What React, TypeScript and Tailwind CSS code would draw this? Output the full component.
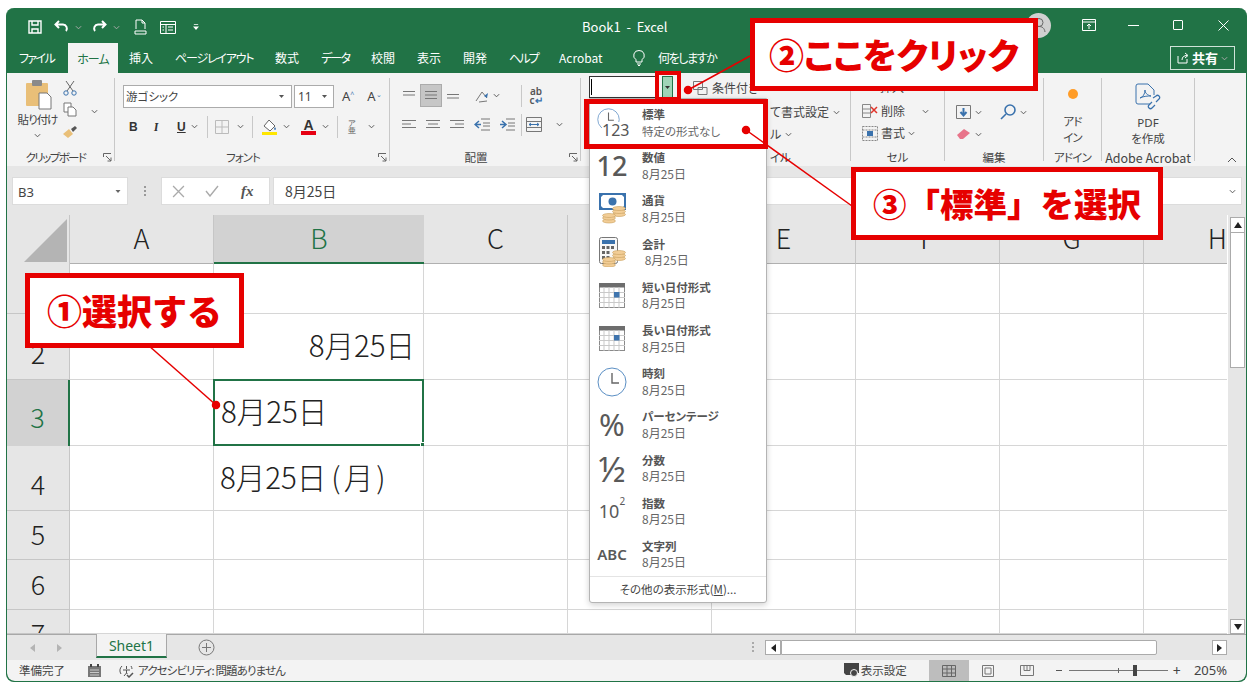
import type { ReactNode } from "react";

const UI = "font-['Noto_Sans_CJK_JP','Noto_Sans',sans-serif] [font-feature-settings:'palt']";
const NOPALT = "[font-feature-settings:normal]";

const Chev = ({ className = "" }: { className?: string }) => (
  <svg viewBox="0 0 8 5" className={`w-[7px] h-[5px] ${className}`} fill="none" stroke="#555" strokeWidth="1.1">
    <path d="M1 1l3 3 3-3" />
  </svg>
);

const Launcher = () => (
  <svg viewBox="0 0 9 9" className="w-[9px] h-[9px]" fill="none" stroke="#666">
    <path d="M.5 4V.5H8" />
    <path d="M3 3l5 5M4.500 8H8V4.500" />
  </svg>
);

const Sep = ({ className = "" }: { className?: string }) => <div className={`w-px bg-[#c8c8c8] ${className}`} />;

const Group = ({ w, label, labelCls = "", launcher, children }: { w: string; label: string; labelCls?: string; launcher?: boolean; children: ReactNode }) => (
  <div className={`${w} h-[93px] flex flex-col shrink-0`}>
    <div className="h-[76px] overflow-visible">{children}</div>
    <div className={`relative h-[17px] text-[11.5px] leading-[17px] text-[#444] text-center whitespace-nowrap ${labelCls}`}>
      {label}
      {launcher && (
        <span className="absolute right-[2px] top-[4px]">
          <Launcher />
        </span>
      )}
    </div>
  </div>
);

const Lines = ({ rows }: { rows: { x: number; w: number }[] }) => (
  <svg viewBox="0 0 16 12" className="w-4 h-3" stroke="#777" strokeWidth="1">
    {rows.map((r, i) => (
      <path key={i} d={`M${r.x} ${1.5 + i * 3.5}h${r.w}`} />
    ))}
  </svg>
);

const Cal = () => (
  <svg viewBox="0 0 26 25" className="w-[26px] h-[25px]">
    <rect x="0.5" y="0.5" width="25" height="24" fill="#fff" stroke="#8a8a8a" />
    <rect x="0" y="0" width="26" height="4.5" fill="#6d6d6d" />
    <path d="M5 4v21M10 4v21M15 4v21M20 4v21M0 9.500h26M0 14.500h26M0 19.500h26" stroke="#c9c9c9" strokeWidth="1" />
    <rect x="15" y="9" width="5.500" height="5.500" fill="#3f74ad" />
  </svg>
);

const Clock = ({ className = "" }: { className?: string }) => (
  <svg viewBox="0 0 30 30" className={className} fill="none">
    <circle cx="15" cy="15" r="14" stroke="#5b8fc4" strokeWidth="1" />
    <path d="M15 6v10h7" stroke="#666" strokeWidth="1.400" />
  </svg>
);

const Coins = () => (
  <g fill="#f2cd96" stroke="#c9a15f" strokeWidth="0.6">
    <ellipse cx="20" cy="21.500" rx="6.500" ry="2" />
    <ellipse cx="20" cy="18.500" rx="6.500" ry="2" />
    <ellipse cx="20" cy="15.500" rx="6.500" ry="2" />
    <ellipse cx="10" cy="28" rx="6.500" ry="2" />
    <ellipse cx="10" cy="25" rx="6.500" ry="2" />
    <ellipse cx="10" cy="22.500" rx="6.500" ry="2" />
  </g>
);

const Money = () => (
  <svg viewBox="0 0 27 31" className="w-[27px] h-[31px]">
    <rect x="1" y="1" width="25" height="15" fill="#fff" stroke="#3a72ad" strokeWidth="2" />
    <path d="M0 0h6L0 6zM27 0h-6l6 6zM0 17h6l-6-6zM27 17h-6l6-6z" fill="#3a72ad" />
    <circle cx="13.500" cy="8.500" r="4" fill="#3a72ad" />
    <Coins />
  </svg>
);

const Calc = () => (
  <svg viewBox="0 0 28 30" className="w-[28px] h-[30px]">
    <rect x="1.500" y="0.500" width="18" height="26" rx="2" fill="#f8f8f8" stroke="#777" />
    <rect x="4" y="3" width="13" height="4" fill="#3a72ad" />
    <path d="M4 9h3v3H4zM8.500 9h3v3h-3zM13 9h3v3h-3zM4 14h3v3H4zM8.500 14h3v3h-3zM4 19h3v3H4zM8.500 19h3v3h-3z" fill="#666" />
    <g transform="translate(1 0)">
      <Coins />
    </g>
  </svg>
);

const NUM = "leading-none text-[#595959] font-['Noto_Sans',sans-serif]";

const FORMATS: { name: string; sub: string; icon: ReactNode }[] = [
  {
    name: "標準",
    sub: "特定の形式なし",
    icon: (
      <div className="relative w-[32px] h-[32px]">
        <Clock className="absolute left-[1px] top-[1px] w-[23px] h-[23px]" />
        <span className="absolute left-[6px] top-[15px] text-[16px] leading-[17px] text-[#555] bg-white font-['Noto_Sans',sans-serif]">123</span>
      </div>
    ),
  },
  { name: "数値", sub: "8月25日", icon: <span className={`text-[27px] font-medium ${NUM}`}>12</span> },
  { name: "通貨", sub: "8月25日", icon: <Money /> },
  { name: "会計", sub: "\u00a08月25日", icon: <Calc /> },
  { name: "短い日付形式", sub: "8月25日", icon: <Cal /> },
  { name: "長い日付形式", sub: "8月25日", icon: <Cal /> },
  { name: "時刻", sub: "8月25日", icon: <Clock className="w-[30px] h-[30px]" /> },
  { name: "パーセンテージ", sub: "8月25日", icon: <span className={`text-[31px] ${NUM}`}>%</span> },
  { name: "分数", sub: "8月25日", icon: <span className={`text-[35px] ${NUM}`}>½</span> },
  {
    name: "指数",
    sub: "8月25日",
    icon: (
      <span className={`text-[18px] ${NUM}`}>
        10<sup className="text-[10px] align-[8px]">2</sup>
      </span>
    ),
  },
  { name: "文字列", sub: "8月25日", icon: <span className={`text-[15px] font-semibold ${NUM}`}>ABC</span> },
];

const COLS = ["A", "B", "C", "D", "E", "F", "G", "H"];

const TABS = [
  { t: "挿入", w: "w-[24px]" },
  { t: "ページレイアウト", w: "w-[78px] tracking-[-1.2px]" },
  { t: "数式", w: "w-[24px]" },
  { t: "データ", w: "w-[28px] tracking-[-1.8px]" },
  { t: "校閲", w: "w-[24px]" },
  { t: "表示", w: "w-[24px]" },
  { t: "開発", w: "w-[24px]" },
  { t: "ヘルプ", w: "w-[28px] tracking-[-1.8px]" },
  { t: "Acrobat", w: "w-[46px]" },
];

const TitleBar = () => (
  <div className="h-[34px] flex items-center text-white">
    <div className="flex items-center pt-[4px]">
      <svg viewBox="0 0 14 14" className="ml-[21px] w-[14px] h-[14px]" fill="none" stroke="#fff" strokeWidth="1.400">
        <path d="M1 1h12v12H1z" />
        <path d="M4 1v4h6V1M4 13V9h6v4" />
      </svg>
      <svg viewBox="0 0 16 14" className="ml-[12px] w-[16px] h-[14px]" fill="none" stroke="#fff" strokeWidth="2">
        <path d="M5 1L1.500 4.500 5 8M2 4.500h7a4 4 0 0 1 3 6.500" />
      </svg>
      <Chev className="ml-[5px] invert" />
      <svg viewBox="0 0 16 14" className="ml-[9px] w-[16px] h-[14px]" fill="none" stroke="#fff" strokeWidth="2">
        <path d="M11 1l3.500 3.500L11 8M14 4.500H7a4 4 0 0 0-3 6.500" />
      </svg>
      <Chev className="ml-[6px] invert" />
      <svg viewBox="0 0 13 16" className="ml-[14px] w-[13px] h-[16px]" fill="none" stroke="#fff">
        <path d="M2 10V1h6l3 3v6M8 1v3h3M1 12h11v3H1z" />
      </svg>
      <svg viewBox="0 0 16 13" className="ml-[13px] w-[16px] h-[13px]" fill="none" stroke="#fff">
        <path d="M.5.500h15v12H.5zM.5 3.500h15M6 3.500v9M8 6h5M8 9h5M2.500 6H4M2.500 9H4" />
      </svg>
      <svg viewBox="0 0 7 7" className="ml-[17px] w-[6px] h-[6px]" fill="#fff">
        <path d="M1 0h5v1H1zM0 3h7L3.500 7z" />
      </svg>
      <div className="ml-[383px] text-[13px] whitespace-nowrap">Book1&nbsp; -&nbsp; Excel</div>
    </div>
    <div className="ml-auto flex items-center">
      <div className="w-[25px] h-[25px] rounded-full bg-[#d0d0d0] flex items-center justify-center">
        <svg viewBox="0 0 16 16" className="w-4 h-4" fill="none" stroke="#666">
          <circle cx="8" cy="5.500" r="4" />
          <path d="M2 15c.5-4 3-5.500 6-5.500s5.500 1.500 6 5.500" />
        </svg>
      </div>
      <svg viewBox="0 0 14 12" className="ml-[31px] w-[14px] h-[12px]" fill="none" stroke="#fff">
        <path d="M.5.500h13v11H.5zM.5 3h13M7 10V5M5 7l2-2 2 2" />
      </svg>
      <div className="ml-[32px] w-[11px] h-px bg-white" />
      <div className="ml-[34px] w-[10px] h-[10px] border border-white rounded-[1px]" />
      <svg viewBox="0 0 11 11" className="ml-[35px] mr-[17px] w-[11px] h-[11px]" stroke="#fff" strokeWidth="1">
        <path d="M.5.500l10 10M10.500.500l-10 10" />
      </svg>
    </div>
  </div>
);

const TabBar = () => (
  <div className="h-[31px] flex text-[12px] text-white whitespace-nowrap">
    <div className="ml-[12px] w-[34px] leading-[31px] tracking-[-1.6px]">ファイル</div>
    <div className="ml-[15px] w-[50px] bg-[#f3f3f3] text-[#217346] text-center leading-[31px] mt-px tracking-[-1px]">ホーム</div>
    <div className="ml-[11px] flex gap-[22px] leading-[31px]">
      {TABS.map((t) => (
        <div key={t.t} className={t.w}>
          {t.t}
        </div>
      ))}
    </div>
    <svg viewBox="0 0 12 16" className="ml-[28px] mt-[8px] w-[12px] h-[16px]" fill="none" stroke="#fff">
      <path d="M6 .500a5 5 0 0 1 3 9.200V12H3V9.700A5 5 0 0 1 6 .500zM4 14h4M5 15.500h2" />
    </svg>
    <div className="ml-[13px] leading-[31px] tracking-[-1.4px]">何をしますか</div>
    <div className="ml-auto mr-[11px] mt-[4px] w-[65px] h-[24px] border border-[#cfe3d8] flex items-center justify-center gap-[3px]">
      <svg viewBox="0 0 12 12" className="w-[12px] h-[12px]" fill="none" stroke="#fff">
        <path d="M1 4v7h9V7M5 8c0-3 2-4.500 5-4.500M8 1l3 2.500L8 6" />
      </svg>
      <span className="font-bold text-[13px]">共有</span>
      <Chev className="invert" />
    </div>
  </div>
);

const Clipboard = () => (
  <div className="flex pl-[10px] pt-[7px] text-[11.5px] text-[#444]">
    <div className="w-[41px] flex flex-col items-center">
      <svg viewBox="0 0 26 30" className="ml-[2px] w-[26px] h-[30px]">
        <rect x="0" y="3" width="22" height="23" rx="1" fill="#e9bf78" />
        <rect x="6" y="0" width="10" height="6" rx="1" fill="#8a8a8a" />
        <path d="M13 13h8l4 4v12H13z" fill="#fff" stroke="#777" />
      </svg>
      <div className="mt-[1px] whitespace-nowrap leading-[16px] tracking-[-1px]">貼り付け</div>
      <Chev className="mt-[6px]" />
    </div>
    <div className="ml-[4px] w-[16px] flex flex-col items-center">
      <svg viewBox="0 0 14 16" className="w-[14px] h-[16px]" fill="none" stroke="#666">
        <path d="M3 1l7 10M11 1L4 11" />
        <circle cx="3" cy="13" r="2.200" stroke="#3a72ad" />
        <circle cx="11" cy="13" r="2.200" stroke="#3a72ad" />
      </svg>
      <svg viewBox="0 0 14 15" className="mt-[6px] w-[14px] h-[15px]" fill="#fff" stroke="#777">
        <path d="M1 1h7v9H1z" />
        <path d="M5 5h5l3 3v6H5z" />
      </svg>
      <svg viewBox="0 0 14 12" className="mt-[9px] w-[14px] h-[12px]">
        <path d="M0 8l6-5 4 5-5 4z" fill="#e9bf78" />
        <path d="M8 3l4-3 2 2-4 4z" fill="#555" />
      </svg>
    </div>
    <Chev className="ml-[13px] mt-[29px]" />
  </div>
);

const Font = () => (
  <div className="pl-[8px] pt-[12px] text-[#444]">
    <div className="flex items-center h-[23px]">
      <div className="w-[169px] h-[23px] bg-white border border-[#ababab] flex items-center pl-[2px] pr-[7px] text-[11.5px] justify-between">
        游ゴシック
        <svg viewBox="0 0 5 3" className="w-[5px] h-[3px]" fill="#555">
          <path d="M0 0h5L2.500 3z" />
        </svg>
      </div>
      <div className="ml-[2px] w-[40px] h-[23px] bg-white border border-[#ababab] flex items-center pl-[3px] pr-[6px] text-[12px] justify-between font-['Noto_Sans',sans-serif]">
        11
        <svg viewBox="0 0 5 3" className="w-[5px] h-[3px]" fill="#555">
          <path d="M0 0h5L2.500 3z" />
        </svg>
      </div>
      <span className="ml-[8px] text-[13px] font-['Noto_Sans',sans-serif]">A<sup className="text-[7px] text-[#3a72ad]">^</sup></span>
      <span className="ml-[13px] text-[13px] font-['Noto_Sans',sans-serif]">A<sup className="text-[7px] text-[#3a72ad]">⌄</sup></span>
    </div>
    <div className="mt-[7px] flex items-center h-[23px] text-[12px] font-['Liberation_Sans',sans-serif] text-[#333]">
      <b className="ml-[6px] w-[10px]">B</b>
      <i className="ml-[15px] font-serif font-bold w-[8px]">I</i>
      <u className="ml-[15px] font-bold w-[9px]">U</u>
      <Chev className="ml-[5px]" />
      <Sep className="ml-[9px] h-[22px]" />
      <svg viewBox="0 0 14 14" className="ml-[7px] w-[14px] h-[14px]" fill="none" stroke="#bbb">
        <path d="M.5.500h13v13H.5zM7 .500v13M.5 7h13" />
      </svg>
      <Chev className="ml-[8px]" />
      <Sep className="ml-[8px] h-[22px]" />
      <svg viewBox="0 0 15 16" className="ml-[9px] w-[15px] h-[16px]">
        <path d="M7 1l6 6-5 5-6-5z" fill="#fff" stroke="#666" />
        <path d="M13 8c1 1.500 1.500 2.500 0 3-1.500-.5-1-1.500 0-3z" fill="#3a72ad" />
        <rect y="13" width="15" height="3" fill="#ffe600" />
      </svg>
      <Chev className="ml-[6px]" />
      <div className="ml-[11px] w-[15px] flex flex-col items-center leading-[12px]">
        <span className="font-bold text-[14px] text-[#333]">A</span>
        <span className="w-[15px] h-[4px] bg-[#e60012]" />
      </div>
      <Chev className="ml-[6px]" />
      <Sep className="ml-[8px] h-[22px]" />
      <div className="ml-[10px] w-[8px] text-[8px] leading-[7px] text-[#555] text-center">ア<br />亜</div>
      <Chev className="ml-[12px]" />
    </div>
  </div>
);

const Align = () => (
  <div className="pl-[11px] pt-[11px]">
    <div className="flex items-center h-[23px]">
      <Lines rows={[{ x: 2, w: 12 }, { x: 2, w: 12 }]} />
      <div className="ml-[3px] w-[22px] h-[23px] bg-[#c6c6c6] border border-[#ababab] flex items-center justify-center">
        <Lines rows={[{ x: 2, w: 12 }, { x: 2, w: 12 }, { x: 2, w: 12 }]} />
      </div>
      <div className="ml-[3px] mt-[6px]">
        <Lines rows={[{ x: 2, w: 12 }, { x: 2, w: 12 }]} />
      </div>
      <svg viewBox="0 0 16 14" className="ml-[13px] w-[16px] h-[14px]" fill="none" stroke="#777">
        <path d="M2 12l6-9 5 6M5 13l8-1" />
        <path d="M14 4l-1 5-3-2z" fill="#3a72ad" stroke="none" />
      </svg>
      <Chev className="ml-[3px]" />
      <Sep className="ml-[21px] h-[22px]" />
      <div className="ml-[5px] w-[18px] text-[10px] leading-[9px] text-[#555] font-['Noto_Sans',sans-serif] text-center font-semibold">
        ab<br />c<span className="text-[#3a72ad]">↵</span>
      </div>
    </div>
    <div className="mt-[6px] flex items-center h-[23px]">
      <Lines rows={[{ x: 1, w: 14 }, { x: 1, w: 9 }, { x: 1, w: 14 }]} />
      <div className="ml-[8px]"><Lines rows={[{ x: 1, w: 14 }, { x: 3, w: 10 }, { x: 1, w: 14 }]} /></div>
      <div className="ml-[8px]"><Lines rows={[{ x: 1, w: 14 }, { x: 6, w: 9 }, { x: 1, w: 14 }]} /></div>
      <svg viewBox="0 0 16 13" className="ml-[9px] w-[16px] h-[13px]" stroke="#777" fill="none">
        <path d="M7 1h9M9 5h7M9 8h7M7 12h9" />
        <path d="M5 3L1 6.500 5 10M1 6.500h6" stroke="#3a72ad" strokeWidth="1.500" />
      </svg>
      <svg viewBox="0 0 16 13" className="ml-[9px] w-[16px] h-[13px]" stroke="#777" fill="none">
        <path d="M7 1h9M9 5h7M9 8h7M7 12h9" />
        <path d="M3 3l4 3.500L3 10M7 6.500H1" stroke="#3a72ad" strokeWidth="1.500" />
      </svg>
      <Sep className="ml-[6px] h-[22px]" />
      <svg viewBox="0 0 16 15" className="ml-[4px] w-[16px] h-[15px]" fill="none" stroke="#777">
        <path d="M.5.500h15v14H.5zM.5 4.500h15M.5 10.500h15" />
        <path d="M3 7.500h10M5 6L3 7.500 5 9M11 6l2 1.500L11 9" stroke="#3a72ad" />
      </svg>
      <Chev className="ml-[14px]" />
    </div>
  </div>
);

const NumberStyles = () => (
  <div className="pl-[8px] pt-[3px] text-[12px] text-[#444]">
    <div className="flex items-start">
      <div className="w-[67px] h-[22px] bg-white border border-[#333]">
        <div className="ml-px mt-[2px] w-px h-[16px] bg-black" />
      </div>
      <div className="ml-[6px] w-[11px] h-[22px] bg-[#9fd5b7] border border-[#217346] flex items-center justify-center">
        <svg viewBox="0 0 5 3" className="w-[5px] h-[3px]" fill="#333">
          <path d="M0 0h5L2.500 3z" />
        </svg>
      </div>
      <svg viewBox="0 0 15 14" className="ml-[20px] mt-[5px] w-[15px] h-[14px]" fill="none" stroke="#777">
        <path d="M.5.500h9v8h-9zM5 6.500h9v7H5z" />
      </svg>
      <span className="ml-[4px] mt-[3px] whitespace-nowrap leading-[18px]">条件付き</span>
    </div>
    <div className="ml-[181px] mt-[3px] flex items-center h-[22px] whitespace-nowrap">
      て書式設定
      <Chev className="ml-[4px]" />
    </div>
    <div className="ml-[181px] flex items-center h-[22px] whitespace-nowrap">
      ル
      <Chev className="ml-[4px]" />
    </div>
  </div>
);

const Cells = () => (
  <div className="pl-[11px] pt-[5px] text-[12px] text-[#444]">
    <div className="h-[17px] leading-[17px] pl-[18px]">挿入</div>
    <div className="mt-[5px] flex items-center h-[22px]">
      <svg viewBox="0 0 16 14" className="w-[16px] h-[14px]" fill="none" stroke="#888">
        <path d="M.5.500h8v13h-8zM.5 5h8M.5 9h8" />
        <path d="M9 3l6 6M15 3l-6 6" stroke="#e0342a" strokeWidth="1.500" />
      </svg>
      <span className="ml-[3px]">削除</span>
      <Chev className="ml-[17px]" />
    </div>
    <div className="flex items-center h-[22px]">
      <svg viewBox="0 0 16 15" className="w-[16px] h-[15px]" fill="none" stroke="#888" strokeDasharray="2 1">
        <path d="M.5.500h15v14H.5zM.5 4h15M.5 11h15" />
        <rect x="5" y="5" width="6" height="5" fill="#3a72ad" stroke="none" />
      </svg>
      <span className="ml-[3px]">書式</span>
      <Chev className="ml-[3px]" />
    </div>
  </div>
);

const Editing = () => (
  <div className="pl-[11px] pt-[28px]">
    <div className="flex items-center h-[22px]">
      <svg viewBox="0 0 15 14" className="w-[15px] h-[14px]" fill="none" stroke="#777">
        <path d="M.5.500h14v13H.5z" />
        <path d="M7.500 3v7M4.500 7l3 3.500 3-3.500" stroke="#3a72ad" strokeWidth="2" />
      </svg>
      <Chev className="ml-[4px]" />
      <svg viewBox="0 0 16 16" className="ml-[18px] w-[16px] h-[16px]" fill="none" stroke="#3a72ad" strokeWidth="1.600">
        <circle cx="10" cy="6" r="5" />
        <path d="M6 10l-5 5" />
      </svg>
      <Chev className="ml-[4px]" />
    </div>
    <div className="flex items-center h-[22px]">
      <svg viewBox="0 0 15 12" className="w-[15px] h-[12px]">
        <path d="M1 7l7-6 6 4-7 6H4z" fill="#e8748a" />
      </svg>
      <Chev className="ml-[4px]" />
    </div>
  </div>
);

const AddIn = () => (
  <div className="pt-[16px] flex flex-col items-center text-[11.5px] leading-[16px] text-[#444]">
    <div className="w-[10px] h-[10px] rounded-full bg-[#ff9c27]" />
    <div className="mt-[14px] tracking-[-0.8px]">アド</div>
    <div className="tracking-[-0.8px]">イン</div>
  </div>
);

const Adobe = () => (
  <div className="pt-[10px] flex flex-col items-center text-[11.5px] leading-[16px] text-[#444]">
    <svg viewBox="0 0 26 28" className="w-[26px] h-[28px]" fill="none" stroke="#3a72ad">
      <path d="M15 21H3a2 2 0 0 1-2-2V3a2 2 0 0 1 2-2h10l6 6v5" />
      <path d="M5 15c3-1 5-4 5-8 0 3 2 5 6 6-3 0-7 0-11 2z" stroke="#3a72ad" />
      <path d="M18 15l3-2a2 2 0 0 1 3 3l-3 3M20 22l-3 3a2 2 0 0 1-3-3l3-3" strokeWidth="1.200" />
    </svg>
    <div className="mt-[4px] font-['Noto_Sans',sans-serif]">PDF</div>
    <div className="-mt-px">を作成</div>
  </div>
);

const Ribbon = () => (
  <div className="h-[93px] bg-[#f3f3f3] flex relative">
    <Group w="w-[107px]" label="クリップボード" labelCls="pr-[10px] tracking-[-1.6px]" launcher>
      <Clipboard />
    </Group>
    <Sep className="my-[5px]" />
    <Group w="w-[274px]" label="フォント" labelCls="pr-[18px] tracking-[-1px]" launcher>
      <Font />
    </Group>
    <Sep className="my-[5px]" />
    <Group w="w-[190px]" label="配置" labelCls="pr-[18px]" launcher>
      <Align />
    </Group>
    <Sep className="my-[5px]" />
    <Group w="w-[269px]" label="イル" labelCls="text-left pl-[189px]">
      <NumberStyles />
    </Group>
    <Sep className="my-[5px]" />
    <Group w="w-[93px]" label="セル">
      <Cells />
    </Group>
    <Sep className="my-[5px]" />
    <Group w="w-[98px]" label="編集">
      <Editing />
    </Group>
    <Sep className="my-[5px]" />
    <Group w="w-[57px]" label="アドイン" labelCls="tracking-[-0.8px]">
      <AddIn />
    </Group>
    <Sep className="my-[5px]" />
    <Group w="w-[92px]" label="Adobe Acrobat" labelCls="text-[12.5px]">
      <Adobe />
    </Group>
    <Sep className="my-[5px]" />
    <svg viewBox="0 0 10 6" className="ml-[32px] mt-[84px] w-[10px] h-[6px]" fill="none" stroke="#555">
      <path d="M1 5l4-4 4 4" />
    </svg>
  </div>
);

const FormulaBar = () => (
  <div className="h-[49px] bg-[#e6e6e6] flex pt-[11px] pl-[5px] pr-[4px] gap-[3px]">
    <div className="w-[116px] h-[28px] bg-white border border-[#dcdcdc] flex items-center justify-between pl-[5px] pr-[6px] text-[13px] text-[#444]">
      <span className="mt-[4px] font-['Noto_Sans',sans-serif]">B3</span>
      <svg viewBox="0 0 5 3" className="w-[6px] h-[3px]" fill="#666">
        <path d="M0 0h5L2.500 3z" />
      </svg>
    </div>
    <div className="w-[27px] flex justify-center items-center h-[28px]">
      <div className="flex flex-col gap-[2px]">
        <span className="w-[2px] h-[2px] bg-[#999]" />
        <span className="w-[2px] h-[2px] bg-[#999]" />
        <span className="w-[2px] h-[2px] bg-[#999]" />
      </div>
    </div>
    <div className="w-[109px] h-[28px] bg-white border border-[#dcdcdc] flex items-center pl-[11px]">
      <svg viewBox="0 0 12 12" className="-ml-[1px] w-[13px] h-[13px]" stroke="#aaa" strokeWidth="1.200">
        <path d="M1 1l10 10M11 1L1 11" />
      </svg>
      <svg viewBox="0 0 14 12" className="ml-[20px] w-[14px] h-[12px]" fill="none" stroke="#aaa" strokeWidth="1.400">
        <path d="M1 6l4 5 8-10" />
      </svg>
      <span className="ml-[22px] text-[15px] font-bold italic text-[#555] font-['Liberation_Serif',serif]">fx</span>
    </div>
    <div className={`flex-1 h-[28px] bg-white border border-[#dcdcdc] flex items-center pl-[11px] pr-[5px] justify-between text-[14px] text-[#444] ${NOPALT}`}>
      8月25日
      <Chev />
    </div>
  </div>
);

const Arrow = ({ d }: { d: string }) => (
  <svg viewBox="0 0 8 6" className="w-[8px] h-[6px]" fill="#222">
    <path d={d} />
  </svg>
);

const Sheet = () => {
  const big = "text-[27px] font-light leading-none text-[#222]";
  const rows: { n: string; pad: string; b: ReactNode; bCls: string }[] = [
    { n: "1", pad: "items-center", b: "", bCls: "" },
    { n: "2", pad: "items-center pt-[12px]", b: "8月25日", bCls: "justify-end pr-[8px]" },
    { n: "3", pad: "items-center pt-[7px]", b: "8月25日", bCls: "pl-[6px]" },
    {
      n: "4",
      pad: "items-center pt-[11px]",
      b: (
        <>
          8月25日<span className="ml-[5px] tracking-[3px]">(月)</span>
        </>
      ),
      bCls: "pl-[6px]",
    },
    { n: "5", pad: "items-center pb-[3px]", b: "", bCls: "" },
    { n: "6", pad: "items-center pb-[2px]", b: "", bCls: "" },
    { n: "7", pad: "items-start pt-[9px]", b: "", bCls: "" },
  ];
  return (
    <div className="flex h-[419px] bg-white">
      <div className={`flex-1 overflow-hidden grid grid-cols-[63px_144px_210px_144px_144px_144px_144px_144px_83px] grid-rows-[49px_50px_66px_66px_65px_49px_50px_24px] ${big} ${NOPALT}`}>
        <div className="bg-[#e6e6e6] border-r border-[#c6c6c6] flex items-end justify-end pr-[2px] pb-[2px]">
          <svg viewBox="0 0 43 43" className="w-[43px] h-[43px]" fill="#b4b4b4">
            <path d="M43 0v43H0z" />
          </svg>
        </div>
        {COLS.map((c) => (
          <div
            key={c}
            className={
              c === "B"
                ? "bg-[#d2d2d2] border-b-2 border-[#217346] text-[#217346] flex items-center justify-center pb-[3px]"
                : c === "H"
                  ? "bg-[#e6e6e6] border-b border-[#b0b0b0] flex items-center justify-end overflow-hidden pb-[3px]"
                  : "bg-[#e6e6e6] border-r border-b border-[#c6c6c6] border-b-[#b0b0b0] flex items-center justify-center pb-[3px]"
            }
          >
            {c}
          </div>
        ))}
        {rows.map((r) => (
          <div key={r.n} className="contents">
            <div
              className={`flex justify-center overflow-hidden ${r.pad} ${
                r.n === "3" ? "bg-[#d2d2d2] text-[#217346] border-r-2 border-[#217346]" : "bg-[#e6e6e6] border-r border-b border-[#c6c6c6]"
              }`}
            >
              {r.n}
            </div>
            {COLS.map((c) => (
              <div
                key={c}
                className={`relative flex items-center text-[29.5px] pb-[3px] whitespace-nowrap ${c === "B" ? r.bCls : ""} ${
                  c === "B" && r.n === "3" ? "border-2 border-[#217346] -ml-px -mt-px pl-[5px]" : "border-r border-b border-[#d6d6d6]"
                } ${c === "H" ? "border-r-0" : ""}`}
              >
                {c === "B" ? r.b : ""}
                {c === "B" && r.n === "3" && <span className="absolute -right-[3px] -bottom-[3px] w-[5px] h-[5px] bg-[#217346] border border-white" />}
              </div>
            ))}
          </div>
        ))}
      </div>
      <div className="w-[18px] bg-[#e6e6e6] flex flex-col border-l border-[#e6e6e6] px-px pt-[2px]">
        <div className="h-[16px] bg-white border border-[#ababab] flex items-center justify-center">
          <Arrow d="M4 0l4 6H0z" />
        </div>
        <div className="h-[135px] bg-white border-x border-b border-[#ababab]" />
        <div className="mt-auto h-[15px] bg-white border border-[#ababab] flex items-center justify-center">
          <Arrow d="M0 0h8L4 6z" />
        </div>
      </div>
    </div>
  );
};

const SheetBar = () => (
  <div className="h-[26px] bg-[#e6e6e6] border-t border-[#a8a8a8] flex relative text-[#217346]">
    <svg viewBox="0 0 32 8" className="ml-[23px] mt-[9px] w-[32px] h-[8px]" fill="#b4b4b4">
      <path d="M5 0v8L0 4zM27 0l5 4-5 4z" />
    </svg>
    <div className="ml-[34px] -mt-px w-[71px] h-[24px] bg-[#f3f3f3] border-x border-[#a8a8a8] border-b-2 border-b-[#217346] text-[14px] flex items-center justify-center font-['Noto_Sans',sans-serif]">
      Sheet1
    </div>
    <svg viewBox="0 0 17 17" className="ml-[31px] mt-[4px] w-[17px] h-[17px]" fill="none" stroke="#777">
      <circle cx="8.500" cy="8.500" r="7.500" />
      <path d="M8.500 4v9M4 8.500h9" />
    </svg>
    <div className="ml-[537px] mt-[7px] flex flex-col gap-[2px]">
      <span className="w-[2px] h-[2px] bg-[#aaa]" />
      <span className="w-[2px] h-[2px] bg-[#aaa]" />
      <span className="w-[2px] h-[2px] bg-[#aaa]" />
    </div>
    <div className="ml-[11px] mt-[5px] w-[16px] h-[15px] bg-white border border-[#ababab] flex items-center justify-center">
      <svg viewBox="0 0 5 8" className="w-[5px] h-[8px]" fill="#222"><path d="M5 0v8L0 4z" /></svg>
    </div>
    <div className="mt-[5px] w-[376px] h-[15px] bg-white border border-[#ababab] rounded-r-[2px]" />
    <div className="ml-[55px] mt-[5px] w-[15px] h-[15px] bg-white border border-[#ababab] flex items-center justify-center">
      <svg viewBox="0 0 5 8" className="w-[5px] h-[8px]" fill="#222"><path d="M0 0l5 4-5 4z" /></svg>
    </div>
  </div>
);

const StatusBar = () => (
  <div className="h-[21px] bg-[#f3f3f3] flex items-center text-[11.5px] text-[#444] whitespace-nowrap rounded-b-lg">
    <span className="ml-[12px] w-[48px]">準備完了</span>
    <svg viewBox="0 0 13 13" className="ml-[21px] w-[13px] h-[13px]">
      <rect x="0" y="2" width="13" height="11" fill="#777" />
      <rect x="2" y="0" width="2" height="3" fill="#444" />
      <rect x="9" y="0" width="2" height="3" fill="#444" />
      <path d="M2 6h9M2 8.500h9M2 11h9" stroke="#ddd" strokeWidth=".8" />
    </svg>
    <svg viewBox="0 0 15 14" className="ml-[18px] w-[15px] h-[14px]" fill="none" stroke="#555">
      <path d="M3 2a6 6 0 0 0-1 8M12 2a6 6 0 0 1 1 3M7.500 2v3M4 6h7M7.500 6v3L5 12M7.500 9l1 1" />
      <path d="M8 11l2 2 4-4" strokeWidth="1.500" />
    </svg>
    <span className="ml-[4px] tracking-[-0.9px]">アクセシビリティ: 問題ありません</span>
    <div className="ml-auto flex items-center">
      <svg viewBox="0 0 16 15" className="w-[16px] h-[15px]">
        <path d="M0 0h15v10H9v2H2l-2-2z" fill="#444" />
        <circle cx="10" cy="10" r="3.500" fill="#444" stroke="#f3f3f3" />
      </svg>
      <span className="ml-[1px] w-[48px]">表示設定</span>
      <div className="ml-[20px] w-[40px] h-[21px] bg-[#bdbdbd] flex items-center justify-center">
        <svg viewBox="0 0 14 12" className="w-[14px] h-[12px]" fill="none" stroke="#666">
          <path d="M.5.500h13v11H.5zM5 .500v11M9.500.500v11M.5 4h13M.5 8h13" />
        </svg>
      </div>
      <svg viewBox="0 0 12 12" className="ml-[13px] w-[12px] h-[12px]" fill="none" stroke="#777">
        <path d="M.5.500h11v11H.5zM3 3h6v6H3z" />
      </svg>
      <svg viewBox="0 0 14 11" className="ml-[26px] w-[14px] h-[11px]" fill="none" stroke="#777">
        <path d="M.5.500h13v10H.5zM7 .500v5M4 .500v5h6v-5" />
      </svg>
      <span className="ml-[22px] w-[6px] h-px bg-[#555]" />
      <div className="ml-[7px] w-[99px] h-px bg-[#777] relative">
        <span className="absolute left-[49px] -top-[2px] w-px h-[5px] bg-[#666]" />
        <span className="absolute left-[64px] -top-[5px] w-[4px] h-[11px] bg-[#444]" />
      </div>
      <span className="ml-[5px] text-[14px] leading-none font-['Noto_Sans',sans-serif]">+</span>
      <span className="ml-[13px] mr-[19px] text-[13px] font-['Noto_Sans',sans-serif]">205%</span>
    </div>
  </div>
);

const Dropdown = () => (
  <div className="absolute left-[589px] top-[98px] w-[178px] h-[505px] bg-white border border-[#b4b4b4] rounded-b-[3px] shadow-[0_2px_6px_rgba(0,0,0,0.18)] pt-[2px] flex flex-col">
    {FORMATS.map((f) => (
      <div key={f.name} className="h-[43.2px] shrink-0 flex items-center">
        <div className="w-[52px] pr-[8px] flex items-center justify-center">{f.icon}</div>
        <div className="text-[11.5px] leading-[16.5px] text-[#666] whitespace-nowrap">
          <div className="font-bold text-[#555]">{f.name}</div>
          <div className={f.name === "標準" ? "" : `text-[12px] ${NOPALT}`}>{f.sub}</div>
        </div>
      </div>
    ))}
    <div className="mt-auto h-[28px] border-t border-[#e4e4e4] text-center text-[11.5px] leading-[25px] text-[#444]">
      その他の表示形式(<span className="underline">M</span>)...
    </div>
  </div>
);

const Callout = ({ pos, text }: { pos: string; text: string }) => (
  <div className={`absolute ${pos} bg-white border-[5px] border-[#e60000] flex items-center justify-center text-[#e60000] font-black whitespace-nowrap`}>{text}</div>
);

const Annotations = () => (
  <>
    <Dropdown />
    <div className="absolute left-[655px] top-[71px] w-[26px] h-[30px] border-[4px] border-[#e60000]" />
    <div className="absolute left-[584px] top-[99px] w-[184px] h-[50px] border-[5px] border-[#e60000]" />
    <Callout pos={`left-[25px] top-[273px] w-[219px] h-[75px] text-[35px] ${NOPALT}`} text="①選択する" />
    <Callout pos="left-[750px] top-[18px] w-[288px] h-[73px] text-[35px]" text="②ここをクリック" />
    <Callout pos={`left-[851px] top-[167px] w-[312px] h-[73px] text-[33.5px] ${NOPALT}`} text="③「標準」を選択" />
    <svg viewBox="0 0 1254 689" className="absolute inset-0 w-[1254px] h-[689px] pointer-events-none" fill="#e60000" stroke="#e60000" strokeWidth="1.500">
      <path d="M148 345L216 405" />
      <circle cx="216" cy="405" r="3.500" />
      <path d="M750 56L688 90" />
      <circle cx="688" cy="90" r="3.500" />
      <path d="M746 130L852 206" />
      <circle cx="746" cy="130" r="3.500" />
    </svg>
  </>
);

export default function App() {
  return (
    <div className={`relative w-[1254px] h-[689px] overflow-hidden bg-white pt-[8px] pl-[6px] ${UI}`}>
      <div className="w-[1241px] h-[674px] bg-[#217346] rounded-t-lg rounded-b-lg border-x border-b border-[#217346] flex flex-col overflow-hidden">
        <TitleBar />
        <TabBar />
        <Ribbon />
        <FormulaBar />
        <Sheet />
        <SheetBar />
        <StatusBar />
      </div>
      <Annotations />
    </div>
  );
}
